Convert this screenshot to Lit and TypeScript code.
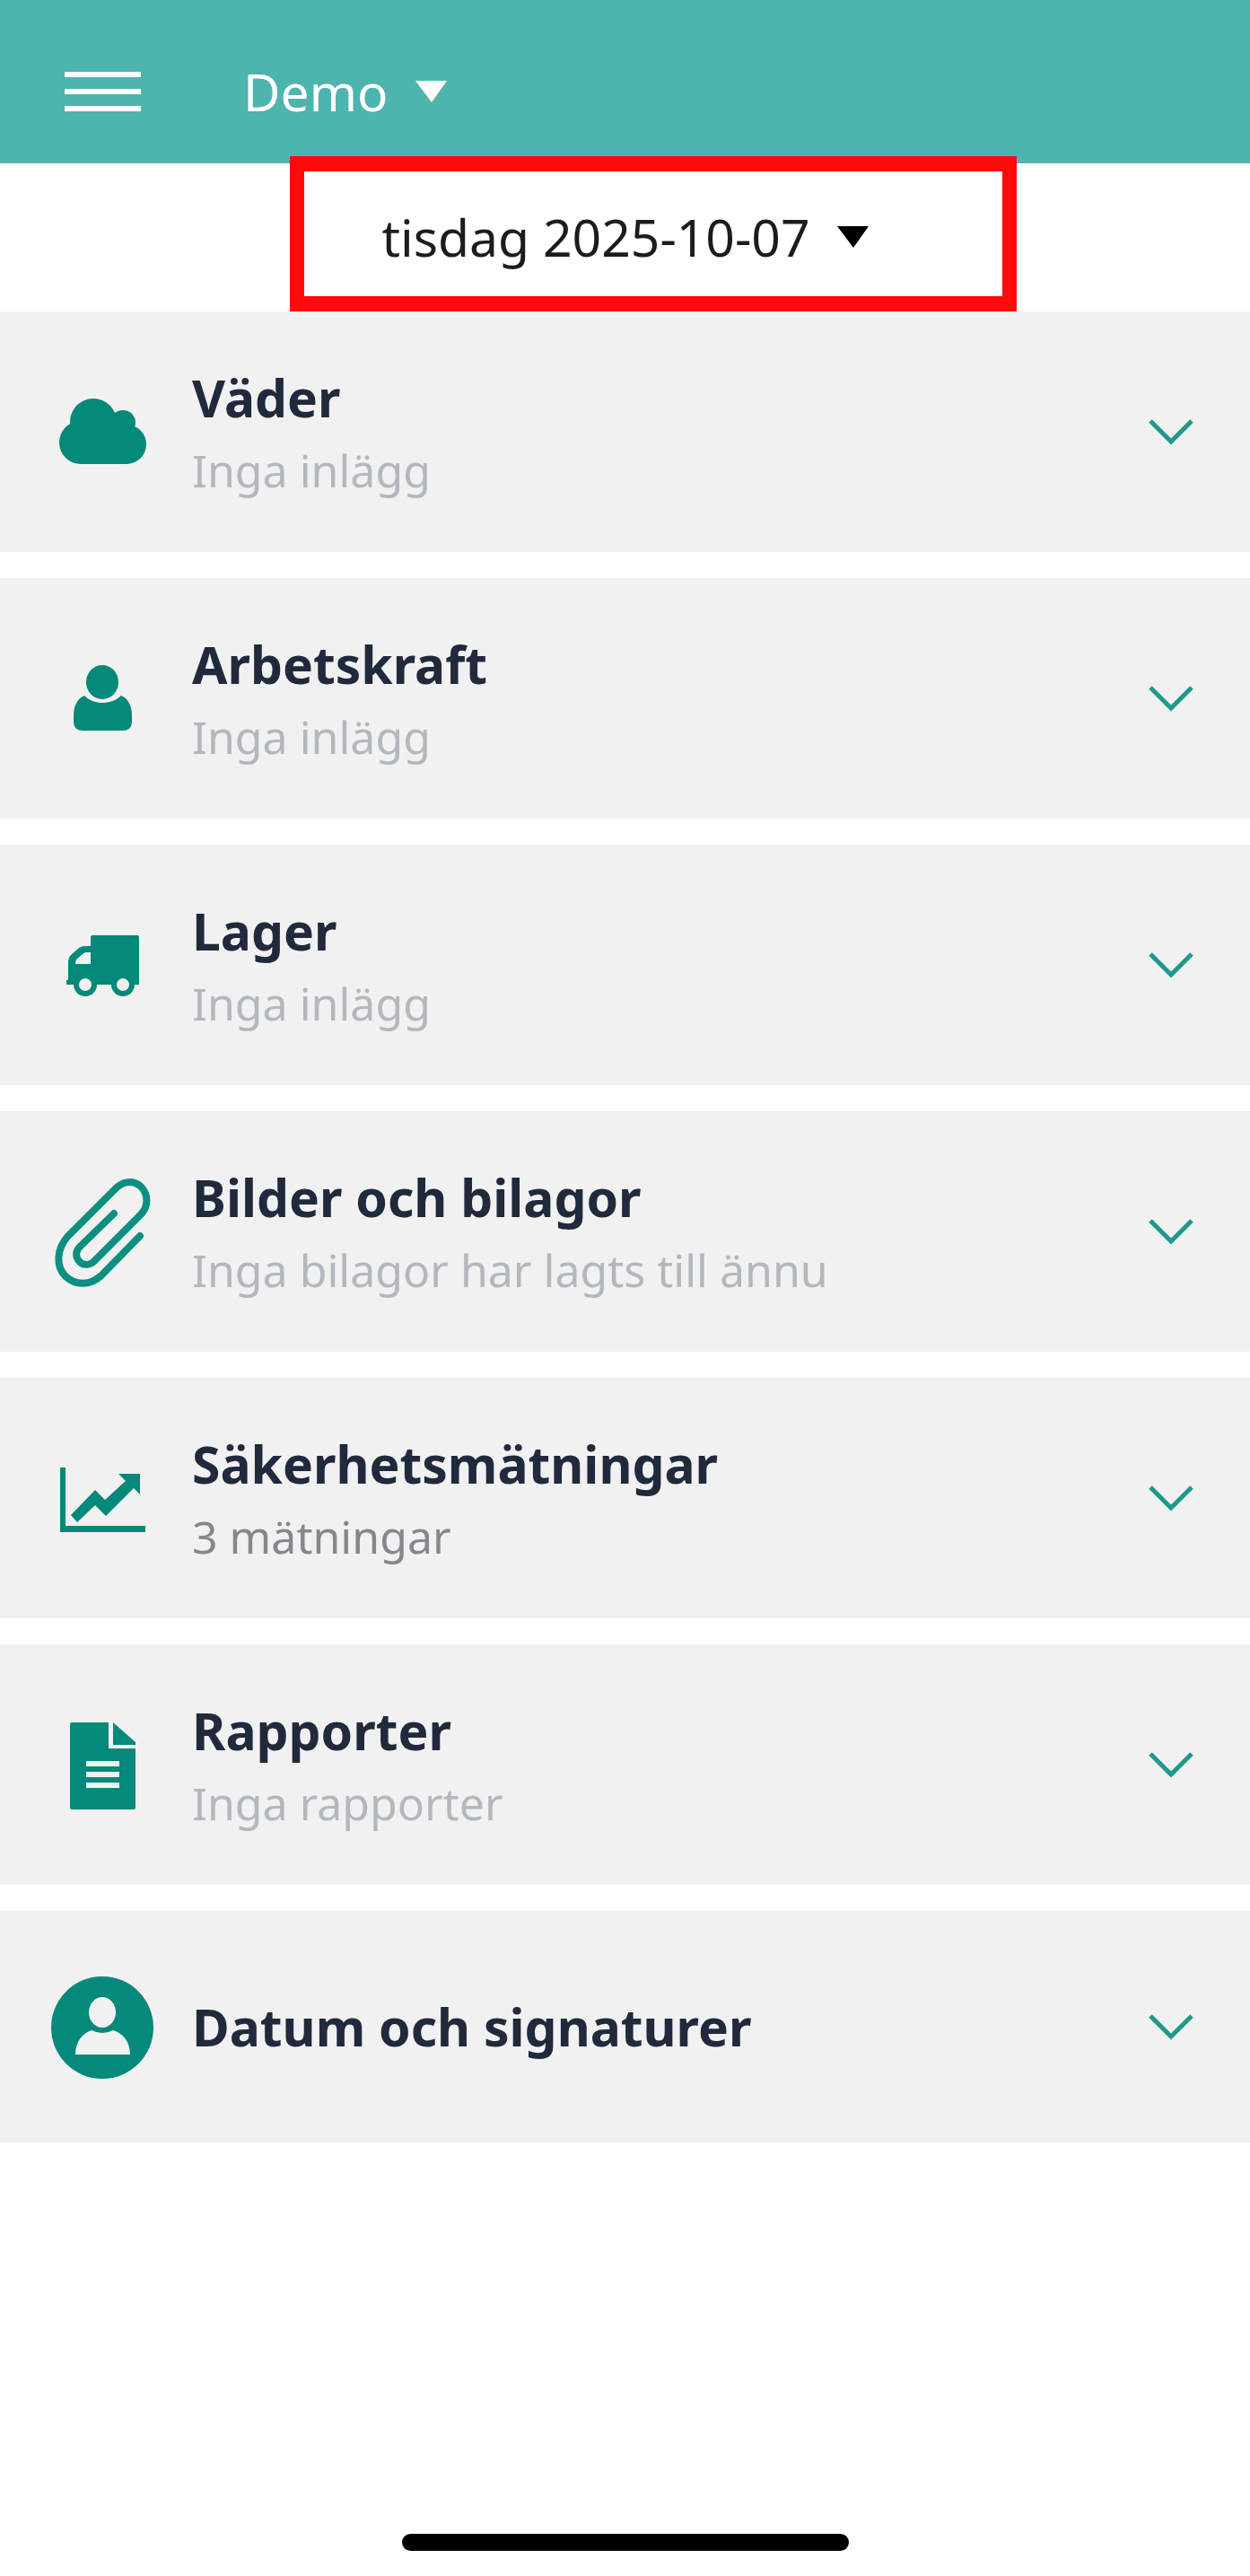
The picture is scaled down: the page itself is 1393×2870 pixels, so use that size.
import { LitElement, html, css, svg, nothing, type SVGTemplateResult } from "lit";
import { customElement, property, state } from "lit/decorators.js";

interface Section {
  id: string;
  title: string;
  summary?: string;
  filled?: boolean;
}

const SECTIONS: Section[] = [
  { id: "cloud", title: "Väder", summary: "Inga inlägg" },
  { id: "person", title: "Arbetskraft", summary: "Inga inlägg" },
  { id: "truck", title: "Lager", summary: "Inga inlägg" },
  { id: "clip", title: "Bilder och bilagor", summary: "Inga bilagor har lagts till ännu" },
  { id: "chart", title: "Säkerhetsmätningar", summary: "3 mätningar", filled: true },
  { id: "report", title: "Rapporter", summary: "Inga rapporter" },
  { id: "account", title: "Datum och signaturer" },
];

const ICONS: Record<string, SVGTemplateResult> = {
  cloud: svg`
    <circle cx="47" cy="51" r="26" />
    <circle cx="80" cy="52" r="14" />
    <circle cx="33" cy="74" r="24" />
    <circle cx="84" cy="76" r="22" />
    <path d="M33 50H84V98H33Z" />`,
  person: svg`
    <ellipse cx="57" cy="44" rx="18" ry="19" />
    <path d="M37 59C43 65 50 67 57 67S72 65 78 59C86 62 90 71 90 81V88Q90 98 79 98H36Q25 98 25 88V81C25 71 29 62 37 59Z" />`,
  truck: svg`
    <path fill-rule="evenodd" d="M46 29H96Q98 29 98 31V84H17V79H19V58Q19 54 22 51L31 43Q34 41 38 41H44V31Q44 29 46 29ZM44 48H39Q37 48 35 50L28 56Q27 58 27 61H44Z" />
    <circle cx="38" cy="84" r="13" />
    <circle cx="80" cy="84" r="13" />
    <circle class="cut" cx="38" cy="84" r="7" />
    <circle class="cut" cx="80" cy="84" r="7" />`,
  clip: svg`
    <path class="line" d="M99 67L56 111C43 123 27 122 16 112C5 101 6 82 18 68L71 15C80 5 92 5 100 12C109 21 108 35 100 43L47 96C42 100 35 100 31 95C27 90 27 84 32 79L70 42" />`,
  chart: svg`
    <path d="M10 28H16V93H105V100H10Z" />
    <path d="M22 81L49 53L60 64L83 43L75 35H99V58L92 51L61 82L49 70L29 89Z" />`,
  report: svg`
    <path d="M23 15H64V44H94V110Q94 112 92 112H23Q21 112 21 110V17Q21 15 23 15ZM69 15L94 37V40H69Z" />
    <path class="cut" d="M39 58H76V64H39ZM39 70H76V76H39ZM39 82H76V88H39Z" />`,
  account: svg`
    <circle cx="57" cy="63" r="57" />
    <ellipse class="cut" cx="57" cy="46" rx="15" ry="17" />
    <path class="cut" d="M27 93C27 79 35 69 45 66Q57 72 69 66C80 69 88 79 88 93Z" />`,
};

@customElement("section-row")
export class SectionRow extends LitElement {
  @property({ attribute: false }) section!: Section;
  @state() private open = false;

  static styles = css`
    :host {
      display: block;
    }
    .row {
      display: flex;
      align-items: center;
      gap: 41px;
      width: 100%;
      box-sizing: border-box;
      min-height: 258px;
      margin: 0;
      padding: 56px 63px 56px 57px;
      border: 0;
      background: #f1f1f1;
      font-family: "Noto Sans", "Open Sans", sans-serif;
      text-align: left;
      cursor: pointer;
    }
    .icon {
      flex: none;
      width: 116px;
      height: 124px;
      fill: #04897a;
      overflow: visible;
    }
    .cut {
      fill: #f1f1f1;
    }
    .line {
      fill: none;
      stroke: #0c8f81;
      stroke-width: 8;
      stroke-linecap: round;
    }
    .text {
      display: flex;
      flex-direction: column;
      flex: 1;
      gap: 6px;
      min-width: 0;
    }
    .title {
      color: #202a3c;
      font-size: 57px;
      font-weight: 700;
      line-height: 80px;
    }
    .summary {
      color: #b3b7be;
      font-size: 50px;
      line-height: 70px;
    }
    .filled {
      color: #84888e;
    }
    .chevron {
      flex: none;
      width: 50px;
      height: 30px;
      fill: none;
      stroke: #1f998c;
      stroke-width: 5;
    }
  `;

  render() {
    const { id, title, summary, filled } = this.section;
    return html`
      <button
        class="row"
        type="button"
        aria-expanded=${this.open ? "true" : "false"}
        @click=${() => (this.open = !this.open)}
      >
        <svg class="icon" viewBox="0 0 116 124" aria-hidden="true">${ICONS[id]}</svg>
        <span class="text">
          <span class="title">${title}</span>
          ${summary
            ? html`<span class="summary ${filled ? "filled" : ""}">${summary}</span>`
            : nothing}
        </span>
        <svg class="chevron" viewBox="0 0 50 30" aria-hidden="true">
          <path d="M2 3L25 26L48 3" />
        </svg>
      </button>
    `;
  }
}

@customElement("app-root")
export class AppRoot extends LitElement {
  static styles = css`
    :host {
      display: flex;
      flex-direction: column;
      min-height: 100vh;
      background: #ffffff;
      font-family: "Noto Sans", "Open Sans", sans-serif;
    }
    .header {
      display: flex;
      align-items: center;
      gap: 114px;
      padding: 62px 72px 40px;
      background: #4db5ae;
      color: #ffffff;
    }
    button,
    select {
      margin: 0;
      padding: 0;
      border: 0;
      background: none;
      color: inherit;
      font-family: inherit;
      cursor: pointer;
    }
    .menu {
      display: flex;
    }
    .bars {
      width: 85px;
      height: 44px;
      fill: #ffffff;
    }
    .project,
    .date {
      display: flex;
      align-items: center;
      gap: 30px;
    }
    .choice,
    .date {
      font-size: 57px;
      line-height: 80px;
    }
    .choice {
      appearance: none;
    }
    .caret {
      width: 35px;
      height: 24px;
      fill: currentColor;
    }
    .datebar {
      position: relative;
      display: flex;
      justify-content: center;
      padding: 42px 0 43px;
      color: #000000;
    }
    .day {
      color: #1c1c1c;
    }
    /* Highlight frame laid over the date picker and the header's lower edge. */
    .frame {
      position: absolute;
      top: -8px;
      bottom: 0;
      left: calc(50% - 374px);
      width: 810px;
      box-sizing: border-box;
      border: solid #ff0a0a;
      border-width: 17px 16px;
      pointer-events: none;
    }
    .sections {
      display: flex;
      flex-direction: column;
      gap: 29px;
      margin: 0;
      padding: 0;
      list-style: none;
    }
    .footer {
      display: flex;
      justify-content: center;
      margin-top: auto;
      padding: 40px 0 28px;
    }
    .home {
      width: 498px;
      height: 19px;
      border-radius: 10px;
      background: #000000;
    }
  `;

  render() {
    const caret = html`
      <svg class="caret" viewBox="0 0 35 24" aria-hidden="true"><path d="M0 0H35L18 24Z" /></svg>
    `;
    return html`
      <header class="header">
        <button class="menu" type="button" aria-label="Meny">
          <svg class="bars" viewBox="0 0 85 44" aria-hidden="true">
            <path d="M0 0H85V6H0ZM0 19H85V25H0ZM0 38H85V44H0Z" />
          </svg>
        </button>
        <label class="project">
          <select class="choice" aria-label="Projekt">
            <option>Demo</option>
          </select>
          ${caret}
        </label>
      </header>
      <div class="datebar">
        <button class="date" type="button" aria-haspopup="dialog">
          <span class="day">tisdag 2025-10-07</span>
          ${caret}
        </button>
        <div class="frame"></div>
      </div>
      <main>
        <ul class="sections">
          ${SECTIONS.map((s) => html`<li><section-row .section=${s}></section-row></li>`)}
        </ul>
      </main>
      <footer class="footer"><div class="home"></div></footer>
    `;
  }
}
